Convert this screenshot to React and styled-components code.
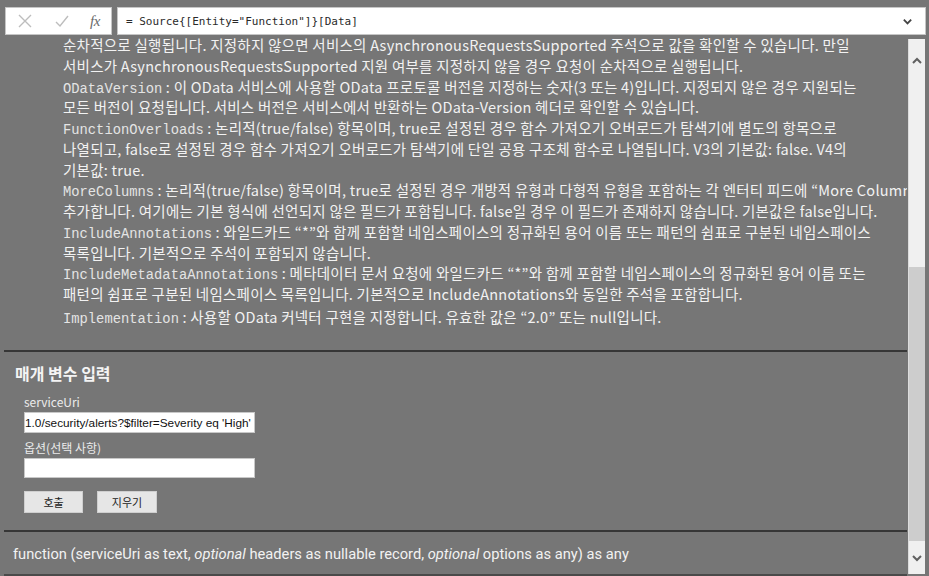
import React from 'react';
import styled, { createGlobalStyle } from 'styled-components';

const GlobalStyle = createGlobalStyle`
    html, body {
        margin: 0;
        padding: 0;
        background: #767676;
        overflow: hidden;
    }
`;

const Page = styled.div`
    width: 929px;
    height: 576px;
    display: flex;
    flex-direction: column;
    background: #767676;
    font-family: 'Noto Sans CJK KR', 'Noto Sans', sans-serif;
    color: #f2f2f2;
`;

const FormulaBar = styled.div`
    display: flex;
    gap: 5px;
    padding: 7px 3px 0 5px;
    height: 28px;
    flex: none;
`;

const ButtonPanel = styled.div`
    width: 107px;
    display: flex;
    align-items: center;
    background: #fff;
    border: 1px solid #c6c6c6;
    box-sizing: border-box;
`;

const IconSlot = styled.div`
    width: ${p => p.w}px;
    display: flex;
    align-items: center;
    justify-content: center;
`;

const Fx = styled.span`
    font-family: 'Liberation Serif', serif;
    font-style: italic;
    font-size: 15px;
    color: #6a6a6a;
    letter-spacing: -0.5px;
`;

const FormulaBox = styled.div`
    flex: 1;
    display: flex;
    align-items: center;
    background: #fff;
    border: 1px solid #c6c6c6;
    box-sizing: border-box;
    padding: 0 12px 0 8px;
`;

const FormulaText = styled.span`
    flex: 1;
    font-family: 'DejaVu Sans Mono', monospace;
    font-size: 11px;
    color: #2a2a2a;
`;

const Body = styled.div`
    flex: 1;
    display: flex;
    min-height: 0;
    padding: 0 4px 0 4px;
`;

const Main = styled.div`
    flex: 1;
    display: flex;
    flex-direction: column;
    min-width: 0;
`;

const Description = styled.div`
    height: 317px;
    flex: none;
    overflow: hidden;
    padding-left: 59px;
    font-size: 14.5px;
    letter-spacing: 0.25px;
    white-space: nowrap;
    border-bottom: 2px solid #363636;
    box-sizing: border-box;
`;

const Line = styled.div`
    height: 20.75px;
    line-height: 20.75px;
    margin-top: ${p => (p.gap ? 2 : 0)}px;
`;

const Key = styled.span`
    font-family: 'Liberation Mono', monospace;
    font-size: 13.8px;
    line-height: 1;
    letter-spacing: 0;
    color: #e4e4e4;
`;

const Params = styled.div`
    padding: 10px 0 0 11px;
    height: 180px;
    flex: none;
    box-sizing: border-box;
    border-bottom: 2px solid #363636;
`;

const Heading = styled.div`
    font-size: 16px;
    font-weight: 700;
    line-height: 22px;
    color: #f4f4f4;
`;

const Form = styled.div`
    padding: 10px 0 0 9px;
    display: flex;
    flex-direction: column;
`;

const Label = styled.div`
    font-size: 12px;
    line-height: 16px;
    color: #ececec;
    margin-top: ${p => p.top || 0}px;
`;

const TextInput = styled.input`
    width: 231px;
    height: ${p => p.h}px;
    margin-top: 2px;
    box-sizing: border-box;
    border: 1px solid #c8c8c8;
    background: #fff;
    padding: 0;
    font-family: 'Liberation Sans', sans-serif;
    font-size: 11.8px;
    color: #111;
    outline: none;
`;

const Buttons = styled.div`
    display: flex;
    gap: 14px;
    margin-top: 13px;
`;

const Button = styled.button`
    height: 22px;
    width: ${p => p.w}px;
    background: #e6e6e6;
    border: 1px solid #cfcfcf;
    font-family: 'Noto Sans CJK KR', sans-serif;
    font-size: 11px;
    color: #222;
    padding: 0;
`;

const Footer = styled.div`
    flex: 1;
    padding: 12px 0 0 9px;
    font-family: 'Roboto', 'Liberation Sans', sans-serif;
    font-size: 14.7px;
    line-height: 20px;
    color: #f2f2f2;
    border-bottom: 2px solid #4a4a4a;
`;

const Scrollbar = styled.div`
    width: 17px;
    margin: 4px 0 2px 1px;
    display: flex;
    flex-direction: column;
    background: #f0f0f0;
    border-left: 1px solid #dcdcdc;
    box-sizing: border-box;
`;

const ScrollButton = styled.div`
    height: ${p => p.h}px;
    display: flex;
    align-items: center;
    justify-content: center;
`;

const Track = styled.div`
    flex: 1;
    display: flex;
    flex-direction: column;
    justify-content: flex-end;
`;

const Thumb = styled.div`
    height: ${p => p.h}px;
    background: #cdcdcd;
`;

const Chevron = ({ up, color = '#606060', size = 12 }) => (
    <svg width={size} height={size} viewBox="0 0 12 12">
        <path
            d={up ? 'M2 8 L6 4 L10 8' : 'M2 4 L6 8 L10 4'}
            fill="none"
            stroke={color}
            strokeWidth="2"
        />
    </svg>
);

const lines = [
    ['', '순차적으로 실행됩니다. 지정하지 않으면 서비스의 AsynchronousRequestsSupported 주석으로 값을 확인할 수 있습니다. 만일'],
    ['', '서비스가 AsynchronousRequestsSupported 지원 여부를 지정하지 않을 경우 요청이 순차적으로 실행됩니다.'],
    ['ODataVersion', '이 OData 서비스에 사용할 OData 프로토콜 버전을 지정하는 숫자(3 또는 4)입니다. 지정되지 않은 경우 지원되는'],
    ['', '모든 버전이 요청됩니다. 서비스 버전은 서비스에서 반환하는 OData-Version 헤더로 확인할 수 있습니다.'],
    ['FunctionOverloads', '논리적(true/false) 항목이며, true로 설정된 경우 함수 가져오기 오버로드가 탐색기에 별도의 항목으로'],
    ['', '나열되고, false로 설정된 경우 함수 가져오기 오버로드가 탐색기에 단일 공용 구조체 함수로 나열됩니다. V3의 기본값: false. V4의'],
    ['', '기본값: true.'],
    ['MoreColumns', '논리적(true/false) 항목이며, true로 설정된 경우 개방적 유형과 다형적 유형을 포함하는 각 엔터티 피드에 “More Columns” 열을'],
    ['', '추가합니다. 여기에는 기본 형식에 선언되지 않은 필드가 포함됩니다. false일 경우 이 필드가 존재하지 않습니다. 기본값은 false입니다.'],
    ['IncludeAnnotations', '와일드카드 “*”와 함께 포함할 네임스페이스의 정규화된 용어 이름 또는 패턴의 쉼표로 구분된 네임스페이스'],
    ['', '목록입니다. 기본적으로 주석이 포함되지 않습니다.'],
    ['IncludeMetadataAnnotations', '메타데이터 문서 요청에 와일드카드 “*”와 함께 포함할 네임스페이스의 정규화된 용어 이름 또는'],
    ['', '패턴의 쉼표로 구분된 네임스페이스 목록입니다. 기본적으로 IncludeAnnotations와 동일한 주석을 포함합니다.'],
    ['Implementation', '사용할 OData 커넥터 구현을 지정합니다. 유효한 값은 “2.0” 또는 null입니다.'],
];

const App = () => (
    <Page>
        <GlobalStyle />
        <FormulaBar>
            <ButtonPanel>
                <IconSlot w={38}>
                    <svg width="16" height="16" viewBox="0 0 16 16">
                        <path d="M2 2 L14 14 M14 2 L2 14" stroke="#bdbdbd" strokeWidth="1.4" />
                    </svg>
                </IconSlot>
                <IconSlot w={36}>
                    <svg width="16" height="16" viewBox="0 0 16 16">
                        <path d="M2 9 L6 13 L14 3" fill="none" stroke="#bdbdbd" strokeWidth="1.4" />
                    </svg>
                </IconSlot>
                <IconSlot w={30}>
                    <Fx>fx</Fx>
                </IconSlot>
            </ButtonPanel>
            <FormulaBox>
                <FormulaText>= Source{'{[Entity="Function"]}'}[Data]</FormulaText>
                <Chevron color="#444" size={11} />
            </FormulaBox>
        </FormulaBar>
        <Body>
            <Main>
                <Description>
                    {lines.map(([key, text], i) => (
                        <Line key={i} gap={i === lines.length - 1}>
                            {key && <Key>{key}</Key>}
                            {key ? ` : ${text}` : text}
                        </Line>
                    ))}
                </Description>
                <Params>
                    <Heading>매개 변수 입력</Heading>
                    <Form>
                        <Label>serviceUri</Label>
                        <TextInput h={21} readOnly value="1.0/security/alerts?$filter=Severity eq 'High'" />
                        <Label top={7}>옵션(선택 사항)</Label>
                        <TextInput h={20} readOnly value="" />
                        <Buttons>
                            <Button w={59}>호출</Button>
                            <Button w={60}>지우기</Button>
                        </Buttons>
                    </Form>
                </Params>
                <Footer>
                    function (serviceUri as text, <i>optional</i> headers as nullable record, <i>optional</i> options as any) as any
                </Footer>
            </Main>
            <Scrollbar>
                <ScrollButton h={44}>
                    <Chevron up />
                </ScrollButton>
                <Track>
                    <Thumb h={274} />
                </Track>
                <ScrollButton h={33}>
                    <Chevron />
                </ScrollButton>
            </Scrollbar>
        </Body>
    </Page>
);

export default App;
